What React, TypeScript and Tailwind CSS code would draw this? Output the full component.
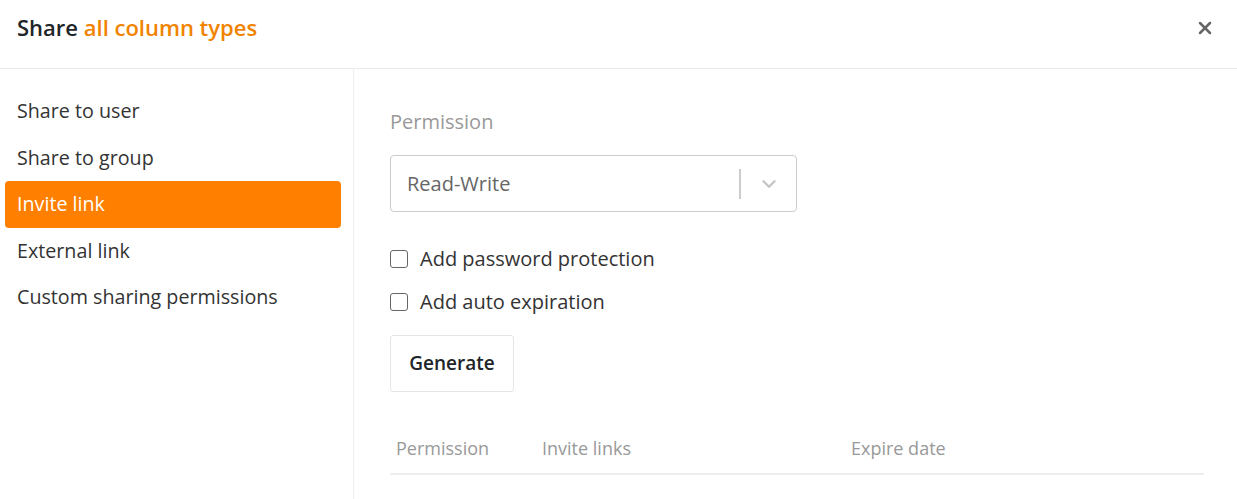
import { ChevronDown, X } from "lucide-react";

const navItems = [
  "Share to user",
  "Share to group",
  "Invite link",
  "External link",
  "Custom sharing permissions",
];

export default function App() {
  const active = "Invite link";

  return (
    <div
      className="w-[1237px] h-[499px] bg-white text-[#333] overflow-hidden flex flex-col"
      style={{ fontFamily: '"Open Sans", "Noto Sans", sans-serif' }}
    >
      {/* header */}
      <div className="h-[69px] shrink-0 border-b border-[#e9e9e9] flex items-center justify-between pl-[17px] pr-[22px] pb-[13px]">
        <h2 className="text-[22px] font-semibold text-[#212529]">
          Share <span className="text-[#f08300]">all column types</span>
        </h2>
        <X className="w-[20px] h-[20px] text-[#666]" strokeWidth={3} />
      </div>

      <div className="flex flex-1 min-h-0">
        {/* sidebar */}
        <div className="w-[354px] shrink-0 border-r border-[#eee] pt-[19px] pl-[5px] pr-[12px] flex flex-col">
          {navItems.map((item) => (
            <div
              key={item}
              className={
                "h-[46.5px] flex items-center px-[12px] text-[19.7px] rounded-[4px] " +
                (item === active ? "bg-[#ff8000] text-white" : "text-[#333]")
              }
            >
              {item}
            </div>
          ))}
        </div>

        {/* content */}
        <div className="flex-1 pl-[36px] pr-[33px] pt-[38px]">
          <div className="text-[20px] text-[#999] leading-[30px]">Permission</div>

          <div className="mt-[18px] w-[407px] h-[57px] border border-[#ccc] rounded-[4px] flex items-center pl-[16px]">
            <span className="flex-1 text-[20px] text-[#666]">Read-Write</span>
            <div className="w-[2px] h-[30px] bg-[#ccc]" />
            <div className="w-[55px] flex justify-center">
              <ChevronDown className="w-[22px] h-[22px] text-[#c4c4c4]" strokeWidth={2.6} />
            </div>
          </div>

          <label className="mt-[32px] flex items-center gap-[12px] h-[30px]">
            <span className="w-[18px] h-[18px] border border-[#666] rounded-[3px]" />
            <span className="text-[20px] text-[#333]">Add password protection</span>
          </label>
          <label className="mt-[13px] flex items-center gap-[12px] h-[30px]">
            <span className="w-[18px] h-[18px] border border-[#666] rounded-[3px]" />
            <span className="text-[20px] text-[#333]">Add auto expiration</span>
          </label>

          <button className="mt-[18px] w-[124px] h-[57px] border border-[#e5e5e5] rounded-[3px] text-[19px] font-semibold text-[#212529]">
            Generate
          </button>

          <div className="mt-[32px] border-b-2 border-[#eee] flex h-[51px] items-center text-[18px] text-[#999]">
            <div className="w-[152px] pl-[6px]">Permission</div>
            <div className="w-[309px]">Invite links</div>
            <div>Expire date</div>
          </div>
        </div>
      </div>
    </div>
  );
}
